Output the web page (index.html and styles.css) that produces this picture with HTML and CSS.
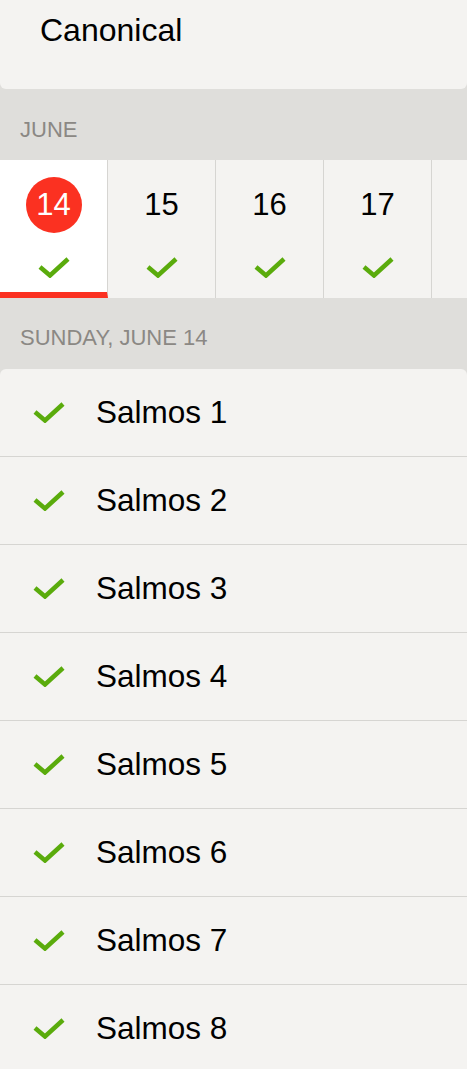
FILE: index.html
```html
<!DOCTYPE html>
<html lang="es">
<head>
    <meta charset="UTF-8">
    <meta name="viewport" content="width=device-width, initial-scale=1.0">
    <title>Canonical</title>
    <link rel="stylesheet" href="styles.css">
</head>
<body>
    <div class="plan">Canonical</div>

    <div class="section-head month">JUNE</div>

    <div class="days">
        <div class="day selected">
            <span class="num">14</span>
            <svg class="check" viewBox="0 0 32 22"><path d="M2 11 L12 19.5 L30 3"/></svg>
        </div>
        <div class="day">
            <span class="num">15</span>
            <svg class="check" viewBox="0 0 32 22"><path d="M2 11 L12 19.5 L30 3"/></svg>
        </div>
        <div class="day">
            <span class="num">16</span>
            <svg class="check" viewBox="0 0 32 22"><path d="M2 11 L12 19.5 L30 3"/></svg>
        </div>
        <div class="day">
            <span class="num">17</span>
            <svg class="check" viewBox="0 0 32 22"><path d="M2 11 L12 19.5 L30 3"/></svg>
        </div>
        <div class="day"></div>
    </div>

    <div class="section-head date">SUNDAY, JUNE 14</div>

    <ul class="readings">
        <li><svg class="check" viewBox="0 0 32 22"><path d="M2 11 L12 19.5 L30 3"/></svg>Salmos 1</li>
        <li><svg class="check" viewBox="0 0 32 22"><path d="M2 11 L12 19.5 L30 3"/></svg>Salmos 2</li>
        <li><svg class="check" viewBox="0 0 32 22"><path d="M2 11 L12 19.5 L30 3"/></svg>Salmos 3</li>
        <li><svg class="check" viewBox="0 0 32 22"><path d="M2 11 L12 19.5 L30 3"/></svg>Salmos 4</li>
        <li><svg class="check" viewBox="0 0 32 22"><path d="M2 11 L12 19.5 L30 3"/></svg>Salmos 5</li>
        <li><svg class="check" viewBox="0 0 32 22"><path d="M2 11 L12 19.5 L30 3"/></svg>Salmos 6</li>
        <li><svg class="check" viewBox="0 0 32 22"><path d="M2 11 L12 19.5 L30 3"/></svg>Salmos 7</li>
        <li><svg class="check" viewBox="0 0 32 22"><path d="M2 11 L12 19.5 L30 3"/></svg>Salmos 8</li>
    </ul>
</body>
</html>
```

FILE: styles.css
```css
body {
    font-family: "Liberation Sans", Arial, sans-serif;
    margin: 0;
    padding: 0;
    background-color: #dfdedb;
    color: #000;
    overflow: hidden;
}
.plan {
    height: 89px;
    box-sizing: border-box;
    padding: 11px 0 0 40px;
    font-size: 32px;
    line-height: 38px;
    background-color: #f4f3f1;
    border-radius: 0 0 6px 6px;
}
.section-head {
    font-size: 22px;
    color: #8b8884;
    padding-left: 20px;
    box-sizing: border-box;
}
.month {
    height: 71px;
    line-height: 82px;
}
.date {
    height: 71px;
    line-height: 80px;
}
.days {
    display: flex;
    height: 138px;
    overflow: hidden;
}
.day {
    flex: 0 0 108px;
    border-right: 1px solid #d6d5d2;
    background-color: #f4f3f1;
    display: flex;
    flex-direction: column;
    align-items: center;
    box-sizing: border-box;
    padding-top: 17px;
}
.day.selected {
    background-color: #fff;
    border-bottom: 6px solid #fb3121;
}
.num {
    width: 56px;
    height: 56px;
    line-height: 56px;
    text-align: center;
    font-size: 31px;
}
.selected .num {
    background-color: #fb3121;
    color: #fff;
    border-radius: 50%;
}
.day .check {
    margin-top: 23px;
}
.check {
    width: 32px;
    height: 22px;
    flex: none;
}
.check path {
    fill: none;
    stroke: #5aab0c;
    stroke-width: 4.5;
}
.readings {
    list-style: none;
    margin: 0;
    padding: 0;
    background-color: #f4f3f1;
    border-radius: 6px 6px 0 0;
}
.readings li {
    display: flex;
    align-items: center;
    height: 88px;
    box-sizing: border-box;
    border-bottom: 1px solid #d6d5d2;
    padding: 0 0 1px 33px;
    font-size: 31.5px;
}
.readings .check {
    margin-right: 31px;
}
```
